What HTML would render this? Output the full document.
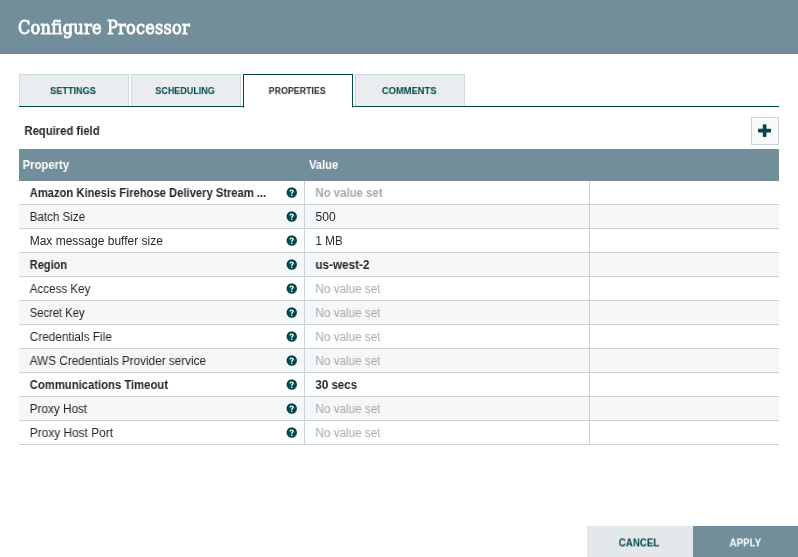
<!DOCTYPE html>
<html>
<head>
<meta charset="utf-8">
<title>Configure Processor</title>
<style>
html,body{margin:0;padding:0;}
body{width:798px;height:557px;overflow:hidden;background:#fff;font-family:"Liberation Sans",sans-serif;position:relative;}
span{display:inline-block;transform-origin:0 50%;will-change:transform;}
.hdr{position:absolute;left:0;top:0;width:798px;height:53px;background:#728e9b;border-bottom:1px solid #6b8996;}
.hdr span{position:absolute;left:18px;top:16px;font-family:"DejaVu Serif Condensed","DejaVu Serif","Liberation Serif",serif;font-weight:normal;font-size:18px;color:#fff;line-height:24px;white-space:nowrap;letter-spacing:0.2px;-webkit-text-stroke:0.8px #fff;}
.tabs{position:absolute;left:19px;top:74px;width:760px;height:32px;border-bottom:1px solid #004849;box-sizing:content-box;}
.tab{position:absolute;top:0;width:108px;height:31px;border:1px solid #ccdadb;border-bottom:0;background:#e9edf0;color:#004849;font-size:10px;font-weight:bold;text-align:center;line-height:32px;}
.tab span{transform-origin:50% 50%;position:relative;left:-0.75px;}
.tab.sel{background:#fff;border:1px solid #004849;border-bottom:1px solid #fff;height:32px;color:#303030;}
.req{position:absolute;left:24px;top:123px;font-size:12px;font-weight:bold;color:#262626;line-height:16px;}
.add{position:absolute;left:751px;top:117px;width:26px;height:26px;border:1px solid #cbd6da;background:#f9fafb;}
.add svg{position:absolute;left:0;top:0;width:26px;height:26px;}
.th{position:absolute;left:19px;top:149px;width:760px;height:32px;background:#728e9b;color:#fff;font-size:12px;font-weight:bold;line-height:32px;}
.th span{position:absolute;top:0;}
.row{position:absolute;left:19px;width:760px;height:23px;border-bottom:1px solid #c7d2d7;font-size:12px;line-height:24px;color:#262626;}
.row.odd{background:#f4f6f7;}
.row .n{position:absolute;left:11px;top:0;white-space:nowrap;}
.row .v{position:absolute;left:297px;top:0;white-space:nowrap;}
.row .l1,.row .l2{position:absolute;top:0;width:1px;height:23px;background:#c7d2d7;}
.row .l1{left:285px;}
.row .l2{left:570px;}
.row.b .n,.row.b .v{font-weight:bold;}
.row .v.u{color:#aaa;font-weight:normal;}
.row.b .v.u{font-weight:bold;color:#a9a9a9;}
.q{position:absolute;left:266px;top:5px;width:12px;height:12px;}
.btn{position:absolute;top:526px;height:31px;font-size:11px;font-weight:bold;text-align:center;line-height:32px;}
.btn span{transform-origin:50% 50%;}
.cancel{left:587px;width:106px;background:#e3e8eb;color:#004849;}
.apply{left:693px;width:105px;background:#728e9b;color:#fff;}
</style>
</head>
<body>
<div class="hdr"><span>Configure Processor</span></div>
<div class="tabs">
<div class="tab" style="left:0"><span style="transform:translateY(0.4px) scale(0.915,0.9)">SETTINGS</span></div>
<div class="tab" style="left:112px"><span style="transform:translateY(0.4px) scale(0.90,0.9)">SCHEDULING</span></div>
<div class="tab sel" style="left:224px"><span style="transform:translateY(0.4px) scale(0.885,0.9)">PROPERTIES</span></div>
<div class="tab" style="left:336px"><span style="transform:translateY(0.4px) scale(0.935,0.9)">COMMENTS</span></div>
</div>
<div class="req"><span style="transform:translateX(0.4px) scaleX(0.94)">Required field</span></div>
<div class="add"><svg viewBox="0 0 26 26"><rect x="6" y="10.8" width="13.1" height="3.7" rx="1" fill="#004849"/><rect x="10.8" y="6.3" width="3.6" height="12.6" rx="1" fill="#004849"/></svg></div>
<div class="th"><span style="left:4px;transform:translateX(-0.4px) scaleX(0.94)">Property</span><span style="left:290px;transform:scaleX(0.93)">Value</span></div>
<div class="row b" style="top:181px"><span class="n" style="transform:translateX(-0.3px) scaleX(0.933)">Amazon Kinesis Firehose Delivery Stream ...</span><svg class="q" viewBox="0 0 12 12"><g transform="translate(1.55 1.25) scale(0.1)"><circle cx="52" cy="52" r="52" fill="#004849"/><path d="M36.5 43 C36.5 33 43 29 51 29 C60 29 65.5 34 65.5 41 C65.5 47 61 50 57 53 C53 56 51.5 58 51.5 66" fill="none" stroke="#fff" stroke-width="14"/><circle cx="51.5" cy="80" r="8" fill="#fff"/></g></svg><i class="l1"></i><span class="v u" style="transform:translateX(-0.6px) scaleX(0.95)">No value set</span><i class="l2"></i></div>
<div class="row odd" style="top:205px"><span class="n" style="transform:translateX(-0.3px) scaleX(0.965)">Batch Size</span><svg class="q" viewBox="0 0 12 12"><g transform="translate(1.55 1.25) scale(0.1)"><circle cx="52" cy="52" r="52" fill="#004849"/><path d="M36.5 43 C36.5 33 43 29 51 29 C60 29 65.5 34 65.5 41 C65.5 47 61 50 57 53 C53 56 51.5 58 51.5 66" fill="none" stroke="#fff" stroke-width="14"/><circle cx="51.5" cy="80" r="8" fill="#fff"/></g></svg><i class="l1"></i><span class="v" style="transform:translateX(-0.6px) scaleX(1.01)">500</span><i class="l2"></i></div>
<div class="row" style="top:229px"><span class="n" style="transform:translateX(-0.3px) scaleX(1.0)">Max message buffer size</span><svg class="q" viewBox="0 0 12 12"><g transform="translate(1.55 1.25) scale(0.1)"><circle cx="52" cy="52" r="52" fill="#004849"/><path d="M36.5 43 C36.5 33 43 29 51 29 C60 29 65.5 34 65.5 41 C65.5 47 61 50 57 53 C53 56 51.5 58 51.5 66" fill="none" stroke="#fff" stroke-width="14"/><circle cx="51.5" cy="80" r="8" fill="#fff"/></g></svg><i class="l1"></i><span class="v" style="transform:translateX(-0.6px) scaleX(0.975)">1 MB</span><i class="l2"></i></div>
<div class="row odd b" style="top:253px"><span class="n" style="transform:translateX(-0.3px) scaleX(0.92)">Region</span><svg class="q" viewBox="0 0 12 12"><g transform="translate(1.55 1.25) scale(0.1)"><circle cx="52" cy="52" r="52" fill="#004849"/><path d="M36.5 43 C36.5 33 43 29 51 29 C60 29 65.5 34 65.5 41 C65.5 47 61 50 57 53 C53 56 51.5 58 51.5 66" fill="none" stroke="#fff" stroke-width="14"/><circle cx="51.5" cy="80" r="8" fill="#fff"/></g></svg><i class="l1"></i><span class="v" style="transform:translateX(-0.6px) scaleX(0.975)">us-west-2</span><i class="l2"></i></div>
<div class="row" style="top:277px"><span class="n" style="transform:translateX(-0.3px) scaleX(0.967)">Access Key</span><svg class="q" viewBox="0 0 12 12"><g transform="translate(1.55 1.25) scale(0.1)"><circle cx="52" cy="52" r="52" fill="#004849"/><path d="M36.5 43 C36.5 33 43 29 51 29 C60 29 65.5 34 65.5 41 C65.5 47 61 50 57 53 C53 56 51.5 58 51.5 66" fill="none" stroke="#fff" stroke-width="14"/><circle cx="51.5" cy="80" r="8" fill="#fff"/></g></svg><i class="l1"></i><span class="v u" style="transform:translateX(-0.6px) scaleX(0.975)">No value set</span><i class="l2"></i></div>
<div class="row odd" style="top:301px"><span class="n" style="transform:translateX(-0.3px) scaleX(0.935)">Secret Key</span><svg class="q" viewBox="0 0 12 12"><g transform="translate(1.55 1.25) scale(0.1)"><circle cx="52" cy="52" r="52" fill="#004849"/><path d="M36.5 43 C36.5 33 43 29 51 29 C60 29 65.5 34 65.5 41 C65.5 47 61 50 57 53 C53 56 51.5 58 51.5 66" fill="none" stroke="#fff" stroke-width="14"/><circle cx="51.5" cy="80" r="8" fill="#fff"/></g></svg><i class="l1"></i><span class="v u" style="transform:translateX(-0.6px) scaleX(0.975)">No value set</span><i class="l2"></i></div>
<div class="row" style="top:325px"><span class="n" style="transform:translateX(-0.3px) scaleX(0.985)">Credentials File</span><svg class="q" viewBox="0 0 12 12"><g transform="translate(1.55 1.25) scale(0.1)"><circle cx="52" cy="52" r="52" fill="#004849"/><path d="M36.5 43 C36.5 33 43 29 51 29 C60 29 65.5 34 65.5 41 C65.5 47 61 50 57 53 C53 56 51.5 58 51.5 66" fill="none" stroke="#fff" stroke-width="14"/><circle cx="51.5" cy="80" r="8" fill="#fff"/></g></svg><i class="l1"></i><span class="v u" style="transform:translateX(-0.6px) scaleX(0.975)">No value set</span><i class="l2"></i></div>
<div class="row odd" style="top:349px"><span class="n" style="transform:translateX(-0.3px) scaleX(0.978)">AWS Credentials Provider service</span><svg class="q" viewBox="0 0 12 12"><g transform="translate(1.55 1.25) scale(0.1)"><circle cx="52" cy="52" r="52" fill="#004849"/><path d="M36.5 43 C36.5 33 43 29 51 29 C60 29 65.5 34 65.5 41 C65.5 47 61 50 57 53 C53 56 51.5 58 51.5 66" fill="none" stroke="#fff" stroke-width="14"/><circle cx="51.5" cy="80" r="8" fill="#fff"/></g></svg><i class="l1"></i><span class="v u" style="transform:translateX(-0.6px) scaleX(0.975)">No value set</span><i class="l2"></i></div>
<div class="row b" style="top:373px"><span class="n" style="transform:translateX(-0.3px) scaleX(0.94)">Communications Timeout</span><svg class="q" viewBox="0 0 12 12"><g transform="translate(1.55 1.25) scale(0.1)"><circle cx="52" cy="52" r="52" fill="#004849"/><path d="M36.5 43 C36.5 33 43 29 51 29 C60 29 65.5 34 65.5 41 C65.5 47 61 50 57 53 C53 56 51.5 58 51.5 66" fill="none" stroke="#fff" stroke-width="14"/><circle cx="51.5" cy="80" r="8" fill="#fff"/></g></svg><i class="l1"></i><span class="v" style="transform:translateX(-0.6px) scaleX(0.96)">30 secs</span><i class="l2"></i></div>
<div class="row odd" style="top:397px"><span class="n" style="transform:translateX(-0.3px) scaleX(0.978)">Proxy Host</span><svg class="q" viewBox="0 0 12 12"><g transform="translate(1.55 1.25) scale(0.1)"><circle cx="52" cy="52" r="52" fill="#004849"/><path d="M36.5 43 C36.5 33 43 29 51 29 C60 29 65.5 34 65.5 41 C65.5 47 61 50 57 53 C53 56 51.5 58 51.5 66" fill="none" stroke="#fff" stroke-width="14"/><circle cx="51.5" cy="80" r="8" fill="#fff"/></g></svg><i class="l1"></i><span class="v u" style="transform:translateX(-0.6px) scaleX(0.975)">No value set</span><i class="l2"></i></div>
<div class="row" style="top:421px"><span class="n" style="transform:translateX(-0.3px) scaleX(0.992)">Proxy Host Port</span><svg class="q" viewBox="0 0 12 12"><g transform="translate(1.55 1.25) scale(0.1)"><circle cx="52" cy="52" r="52" fill="#004849"/><path d="M36.5 43 C36.5 33 43 29 51 29 C60 29 65.5 34 65.5 41 C65.5 47 61 50 57 53 C53 56 51.5 58 51.5 66" fill="none" stroke="#fff" stroke-width="14"/><circle cx="51.5" cy="80" r="8" fill="#fff"/></g></svg><i class="l1"></i><span class="v u" style="transform:translateX(-0.6px) scaleX(0.975)">No value set</span><i class="l2"></i></div>
<div class="btn cancel"><span style="transform:translate(-0.9px,0.4px) scaleX(0.89)">CANCEL</span></div>
<div class="btn apply"><span style="transform:translate(-0.5px,0.4px) scaleX(0.89)">APPLY</span></div>
</body>
</html>
